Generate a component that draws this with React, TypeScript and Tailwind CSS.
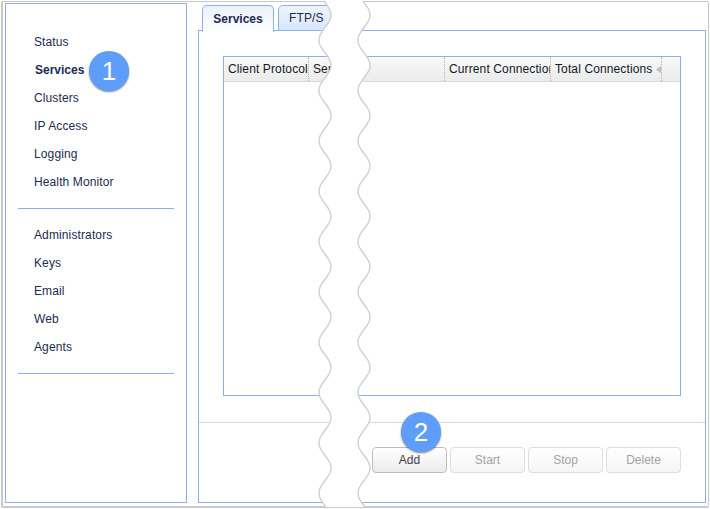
const FONT = "font-['Liberation_Sans',Arial,sans-serif]";

function wave(offset: number): [number, number][] {
  const pts: [number, number][] = [];
  for (let y = 1; y <= 507; y += 2) {
    pts.push([offset + 6 * Math.cos((2 * Math.PI * (y - 15)) / 50.33), y]);
  }
  return pts;
}
const toD = (p: [number, number][]) => p.map(([x, y], i) => `${i ? "L" : "M"}${x.toFixed(2)} ${y}`).join(" ");

function TornGap() {
  const left = wave(325);
  const right = wave(364);
  const fill = toD(left) + " " + toD([...right].reverse()).replace("M", "L") + " Z";
  return (
    <svg className="absolute z-20 left-0 top-0 w-[710px] h-[509px] pointer-events-none" viewBox="0 0 710 509" fill="none">
      <path d={fill} fill="#ffffff" />
      <path d={toD(left)} stroke="#d0d0d0" strokeWidth="1.4" />
      <path d={toD(right)} stroke="#d0d0d0" strokeWidth="1.4" />
    </svg>
  );
}

function Badge({ n, className }: { n: string; className: string }) {
  return (
    <div className={`absolute z-30 w-10 h-10 rounded-full bg-[#5f9dfb] text-white text-[26px] leading-none flex items-center justify-center shadow-[0_1px_2px_rgba(0,0,0,0.5)] ${className}`}>
      {n}
    </div>
  );
}

function NavItem({ label, active }: { label: string; active?: boolean }) {
  return (
    <div className={`h-7 flex items-center text-[12px] text-[#1c2b52] ${active ? "font-bold pl-[17px]" : "pl-4 tracking-[0.12px]"}`}>
      {label}
    </div>
  );
}

function Col({ label, className, arrow }: { label: string; className: string; arrow?: boolean }) {
  return (
    <div className={`h-full flex items-center justify-between shrink-0 overflow-hidden whitespace-nowrap border-r border-dotted border-[#b5b5b5] ${className}`}>
      <span>{label}</span>
      {arrow && (
        <svg width="5" height="7" viewBox="0 0 5 7" className="shrink-0">
          <path d="M5 0 L0 3.5 L5 7 Z" fill="#bdbdbd" />
        </svg>
      )}
    </div>
  );
}

function Btn({ label, primary }: { label: string; primary?: boolean }) {
  return (
    <div
      className={`w-[75px] h-[26px] rounded-[4px] border flex items-center justify-center text-[12px] ${
        primary
          ? "border-[#bdbdbd] text-[#444444] bg-gradient-to-b from-[#ffffff] to-[#ececec]"
          : "border-[#dedede] text-[#a3a3a3] bg-gradient-to-b from-[#ffffff] to-[#f5f5f5]"
      }`}
    >
      {label}
    </div>
  );
}

export default function App() {
  return (
    <div className={`relative w-[710px] h-[509px] bg-white overflow-hidden ${FONT}`}>
      <div className="ml-px mt-px w-[708px] h-[507px] border-2 border-l-[2px] border-t-[1px] border-r-[1px] border-[#c9c9c9] rounded-[2px] flex pl-[2px] pt-px">
        <aside className="w-[182px] h-[500px] shrink-0 border border-[#8cb1e8] pt-[24px]">
          <div className="pl-3">
            <NavItem label="Status" />
            <NavItem label="Services" active />
            <NavItem label="Clusters" />
            <NavItem label="IP Access" />
            <NavItem label="Logging" />
            <NavItem label="Health Monitor" />
          </div>
          <div className="mx-3 mt-[12px] h-px bg-[#8cb1e8]" />
          <div className="pl-3 mt-[12px]">
            <NavItem label="Administrators" />
            <NavItem label="Keys" />
            <NavItem label="Email" />
            <NavItem label="Web" />
            <NavItem label="Agents" />
          </div>
          <div className="mx-3 mt-[12px] h-px bg-[#8cb1e8]" />
        </aside>

        <main className="ml-[11px] w-[508px] pt-[2px] flex flex-col h-[500px]">
          <div className="flex gap-[4px] pl-[4px] h-[26px] relative z-10 -mb-px">
            <div className="w-[72px] h-[27px] rounded-t-[5px] border border-b-0 border-[#8cb1e8] bg-gradient-to-b from-[#e9f1fc] to-[#ffffff] flex items-center justify-center text-[12px] font-bold text-[#1c2b52]">
              Services
            </div>
            <div className="w-[72px] h-[26px] rounded-t-[5px] border border-[#8cb1e8] bg-gradient-to-b from-[#eef4fd] to-[#d9e6fa] flex items-center pl-[10px] text-[12px] text-[#1c2b52] tracking-[0.12px]">
              FTP/S
            </div>
          </div>
          <div className="flex-1 border border-[#8cb1e8] flex flex-col">
            <div className="ml-6 mt-[25px] w-[458px] h-[340px] border border-[#8cb1e8] text-[12px] text-[#111827] tracking-[0.12px]">
              <div className="h-[25px] flex bg-gradient-to-b from-[#f9f9f9] to-[#ebebeb] border-b border-[#d6d6d6]">
                <Col label="Client Protocol" className="w-[85px] pl-1" />
                <Col label="Server" className="w-[136px] pl-1" />
                <Col label="Current Connections" className="w-[106px] pl-1" />
                <Col label="Total Connections" className="w-[111px] pl-1" arrow />
              </div>
            </div>
            <div className="mt-[26px] flex-1 border-t border-[#d9d9d9] pt-6 flex justify-end gap-[3px] pr-6">
              <Btn label="Add" primary />
              <Btn label="Start" />
              <Btn label="Stop" />
              <Btn label="Delete" />
            </div>
          </div>
        </main>
      </div>

      <TornGap />
      <Badge n="1" className="left-[89px] top-[51px]" />
      <Badge n="2" className="left-[401px] top-[412px]" />
    </div>
  );
}
